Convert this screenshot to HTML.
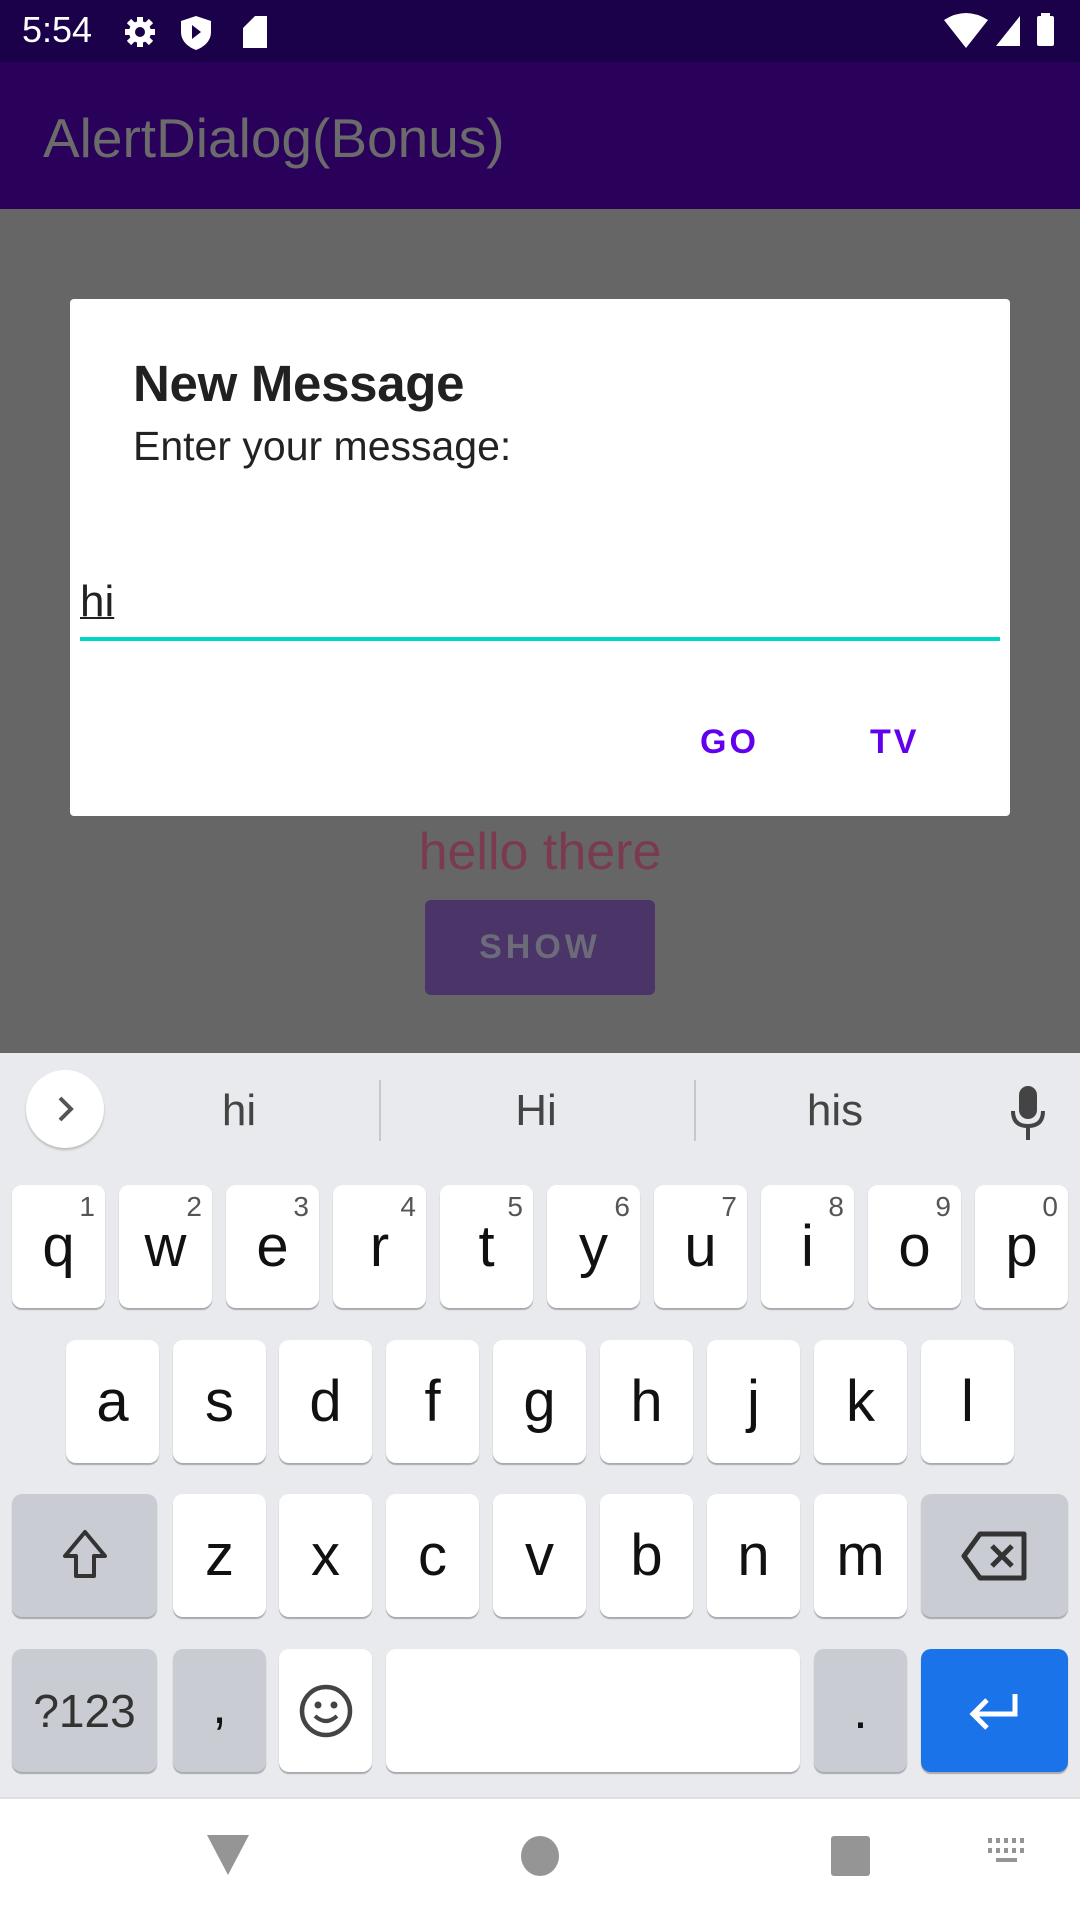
<!DOCTYPE html>
<html><head><meta charset="utf-8"><style>
*{margin:0;padding:0;box-sizing:border-box}
body{width:1080px;height:1920px;position:relative;overflow:hidden;font-family:"Liberation Sans",sans-serif;background:#666}
.a{position:absolute}
.k{position:absolute;width:93px;height:123px;background:#fff;border-radius:10px;box-shadow:0 2px 1px #a8a9ad;display:flex;align-items:center;justify-content:center;font-size:58px;color:#111}
.g{background:#c9ccd2}
.n{position:absolute;top:6px;right:10px;font-size:28px;color:#555}
</style></head><body>
<div class="a" style="left:0;top:0;width:1080px;height:62px;background:#1b004a"></div>
<div class="a" style="left:22px;top:9px;font-size:36px;color:#fff">5:54</div>
<svg class="a" style="left:120px;top:12px" width="160" height="40" viewBox="0 0 160 40">
<g fill="#fff"><circle cx="20" cy="20" r="11"/><g stroke="#fff" stroke-width="6"><path d="M20 5v30M5 20h30M9 9l22 22M31 9L9 31"/></g><circle cx="20" cy="20" r="5" fill="#1b004a"/>
<g transform="translate(14 0)"><path d="M62 4l15 5v11c0 9-7 15-15 18-8-3-15-9-15-18V9z"/><path d="M58 13l9 7-9 7z" fill="#1b004a"/></g>
<g transform="translate(9 0)"><path d="M126 4h12v32h-24V16z"/></g></g></svg>
<svg class="a" style="left:940px;top:12px" width="130" height="38" viewBox="0 0 130 38">
<g fill="#fff"><path d="M4 8q22-14 44 0L26 36z"/><path d="M80 34V4L56 34z"/><rect x="97" y="4" width="17" height="30" rx="2"/><rect x="101" y="1" width="9" height="4"/></g></svg>
<div class="a" style="left:0;top:62px;width:1080px;height:147px;background:#29005a"></div>
<div class="a" style="left:43px;top:106px;font-size:55px;color:#6b6b6b">AlertDialog(Bonus)</div>

<div class="a" style="left:0;top:822px;width:1080px;text-align:center;font-size:52px;color:#7a3b50">hello there</div>
<div class="a" style="left:425px;top:900px;width:230px;height:95px;background:#4a3468;border-radius:6px;text-align:center;line-height:95px;font-size:34px;font-weight:bold;letter-spacing:4px;color:#6d6a7a">SHOW</div>

<div class="a" style="left:70px;top:299px;width:940px;height:517px;background:#fff;border-radius:4px">
<div class="a" style="left:63px;top:55px;font-size:51px;font-weight:bold;color:#212121;letter-spacing:-0.3px">New Message</div>
<div class="a" style="left:63px;top:124px;font-size:41px;color:#222">Enter your message:</div>
<div class="a" style="left:10px;top:278px;font-size:44px;color:#222;text-decoration:underline;text-decoration-thickness:2px">hi</div>
<div class="a" style="left:10px;top:338px;width:920px;height:4px;background:#00d6c4"></div>
<div class="a" style="left:630px;top:424px;font-size:34px;font-weight:bold;color:#6200ee;letter-spacing:3px">GO</div>
<div class="a" style="left:800px;top:424px;font-size:34px;font-weight:bold;color:#6200ee;letter-spacing:3px">TV</div>
</div>

<div class="a" style="left:0;top:1053px;width:1080px;height:744px;background:#e8eaed"></div>
<div class="a" style="left:26px;top:1070px;width:78px;height:78px;border-radius:50%;background:#fff;box-shadow:0 2px 2px #bbb"></div>
<svg class="a" style="left:50px;top:1094px" width="30" height="30" viewBox="0 0 30 30"><path d="M10 4l11 11-11 11" fill="none" stroke="#555" stroke-width="4"/></svg>
<div class="a" style="left:189px;top:1086px;width:100px;text-align:center;font-size:44px;color:#444">hi</div>
<div class="a" style="left:486px;top:1086px;width:100px;text-align:center;font-size:44px;color:#444">Hi</div>
<div class="a" style="left:785px;top:1086px;width:100px;text-align:center;font-size:44px;color:#444">his</div>
<div class="a" style="left:379px;top:1080px;width:2px;height:61px;background:#c5c7ca"></div>
<div class="a" style="left:694px;top:1080px;width:2px;height:61px;background:#c5c7ca"></div>
<svg class="a" style="left:1008px;top:1085px" width="40" height="56" viewBox="0 0 40 56"><rect x="11" y="1" width="18" height="33" rx="9" fill="#444"/><path d="M5 26q0 15 15 15t15-15M20 41v14" fill="none" stroke="#444" stroke-width="4"/></svg>

<div class="k" style="left:12px;top:1185px">q<span class="n">1</span></div>
<div class="k" style="left:119px;top:1185px">w<span class="n">2</span></div>
<div class="k" style="left:226px;top:1185px">e<span class="n">3</span></div>
<div class="k" style="left:333px;top:1185px">r<span class="n">4</span></div>
<div class="k" style="left:440px;top:1185px">t<span class="n">5</span></div>
<div class="k" style="left:547px;top:1185px">y<span class="n">6</span></div>
<div class="k" style="left:654px;top:1185px">u<span class="n">7</span></div>
<div class="k" style="left:761px;top:1185px">i<span class="n">8</span></div>
<div class="k" style="left:868px;top:1185px">o<span class="n">9</span></div>
<div class="k" style="left:975px;top:1185px">p<span class="n">0</span></div>

<div class="k" style="left:66px;top:1340px">a</div>
<div class="k" style="left:173px;top:1340px">s</div>
<div class="k" style="left:279px;top:1340px">d</div>
<div class="k" style="left:386px;top:1340px">f</div>
<div class="k" style="left:493px;top:1340px">g</div>
<div class="k" style="left:600px;top:1340px">h</div>
<div class="k" style="left:707px;top:1340px">j</div>
<div class="k" style="left:814px;top:1340px">k</div>
<div class="k" style="left:921px;top:1340px">l</div>

<div class="k g" style="left:12px;top:1494px;width:145px"><svg width="60" height="60" viewBox="0 0 60 60"><path d="M30 6L10 30h11v20h18V30h11z" fill="none" stroke="#333" stroke-width="4" stroke-linejoin="round"/></svg></div>
<div class="k" style="left:173px;top:1494px">z</div>
<div class="k" style="left:279px;top:1494px">x</div>
<div class="k" style="left:386px;top:1494px">c</div>
<div class="k" style="left:493px;top:1494px">v</div>
<div class="k" style="left:600px;top:1494px">b</div>
<div class="k" style="left:707px;top:1494px">n</div>
<div class="k" style="left:814px;top:1494px">m</div>
<div class="k g" style="left:921px;top:1494px;width:147px"><svg width="70" height="56" viewBox="0 0 70 56"><path d="M20 6h44v44H20L4 28z" fill="none" stroke="#333" stroke-width="5" stroke-linejoin="round"/><path d="M32 18l20 20M52 18L32 38" stroke="#333" stroke-width="5"/></svg></div>

<div class="k g" style="left:12px;top:1649px;width:145px;font-size:46px;color:#333">?123</div>
<div class="k g" style="left:173px;top:1649px;font-size:52px;padding-bottom:10px">,</div>
<div class="k" style="left:279px;top:1649px"><svg width="56" height="56" viewBox="0 0 56 56"><circle cx="28" cy="28" r="24" fill="none" stroke="#444" stroke-width="4.5"/><circle cx="20" cy="22" r="3.5" fill="#444"/><circle cx="36" cy="22" r="3.5" fill="#444"/><path d="M17 33q11 10 22 0" fill="none" stroke="#444" stroke-width="4"/></svg></div>
<div class="k" style="left:386px;top:1649px;width:414px"></div>
<div class="k g" style="left:814px;top:1649px;font-size:52px">.</div>
<div class="k" style="left:921px;top:1649px;width:147px;background:#1a73e8"><svg width="60" height="50" viewBox="0 0 60 50"><path d="M50 8v20H10M22 14L8 28l14 14" fill="none" stroke="#fff" stroke-width="5"/></svg></div>

<div class="a" style="left:0;top:1797px;width:1080px;height:123px;background:#fff;border-top:2px solid #e0e0e0"></div>
<svg class="a" style="left:0;top:1830px" width="1080" height="56" viewBox="0 0 1080 56">
<g fill="#959595"><path d="M207 5h42l-21 40z"/><ellipse cx="540" cy="26" rx="19" ry="20"/><rect x="831" y="6" width="39" height="40" rx="3"/>
<g><rect x="988" y="8" width="4" height="5"/><rect x="996" y="8" width="4" height="5"/><rect x="1004" y="8" width="4" height="5"/><rect x="1012" y="8" width="4" height="5"/><rect x="1020" y="8" width="4" height="5"/><rect x="988" y="18" width="4" height="5"/><rect x="996" y="18" width="4" height="5"/><rect x="1004" y="18" width="4" height="5"/><rect x="1012" y="18" width="4" height="5"/><rect x="1020" y="18" width="4" height="5"/><rect x="996" y="28" width="21" height="4"/></g></g></svg>
</body></html>
